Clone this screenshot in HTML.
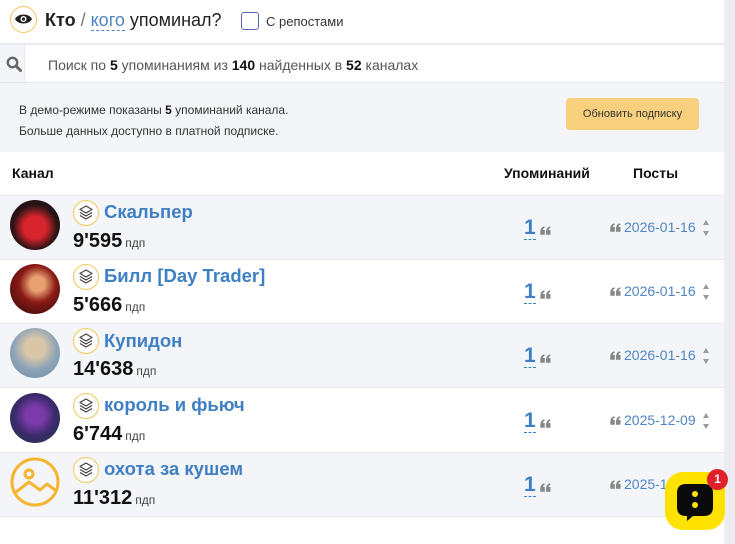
<!DOCTYPE html>
<html><head><meta charset="utf-8"><style>
*{margin:0;padding:0;box-sizing:border-box}
body{width:735px;height:544px;overflow:hidden;background:#fff;font-family:"Liberation Sans",Arial,sans-serif;position:relative;color:#111}
.a{position:absolute}
.sb{left:724px;top:0;width:11px;height:544px;background:#ececf1}
.row{left:0;width:724px;height:64px;border-bottom:1px solid #e6e8ee}
.g{background:#f4f5f8}
.av{left:10px;width:50px;height:50px;border-radius:50%}
.ic{left:73px;width:26px;height:26px;border-radius:50%;border:1.5px solid #f2c75c;background:#fff}
.nm{left:104px;font-size:18.5px;font-weight:bold;color:#3f7fc4}
.sub{left:73px;font-size:20px;font-weight:bold;color:#111}
.sub span{font-size:12px;font-weight:normal;color:#444;margin-left:3px}
.cnt{left:524px;font-size:21px;font-weight:bold;color:#3f7fc4;border-bottom:1px dashed #3f7fc4;line-height:22px}
.dt{left:610px;font-size:14px;color:#4f84c1}
.ar{left:703px;width:0;height:0;border-left:3.5px solid transparent;border-right:3.5px solid transparent}
</style></head><body>
<svg width="0" height="0" style="position:absolute"><defs><symbol id="q" viewBox="0 0 11 9"><path d="M0.3 8.7V5.5Q0.3 1.4 4.3 0.3L4.8 1.6Q3 2.5 2.9 4H4.8V8.7ZM6 8.7V5.5Q6 1.4 10 0.3L10.5 1.6Q8.7 2.5 8.6 4H10.5V8.7Z" fill="#888"/></symbol></defs></svg>
<div class="a sb"></div>
<div class="a" style="left:10px;top:6px;width:27px;height:27px;border-radius:50%;border:1.5px solid #f2c75c"></div>
<svg class="a" style="left:14px;top:12px" width="19" height="14" viewBox="0 0 19 14"><path d="M1 7C4 1 15 1 18 7C15 13 4 13 1 7Z" fill="#222"/><circle cx="9.5" cy="7" r="3" fill="#fff"/><circle cx="9.5" cy="7" r="1.6" fill="#222"/></svg>
<div class="a" style="left:45px;top:10px;font-size:18px;color:#222"><b>Кто</b> <span style="color:#777">/</span> <span style="color:#4f84c1;border-bottom:1px dashed #4f84c1">кого</span> упоминал?</div>
<div class="a" style="left:241px;top:12px;width:18px;height:18px;border:1.5px solid #5566bb;border-radius:3px"></div>
<div class="a" style="left:266px;top:14px;font-size:13px;color:#333">С репостами</div>
<div class="a" style="left:0;top:43px;width:724px;height:2px;background:#e8eaef"></div>
<div class="a" style="left:0;top:45px;width:25px;height:37px;background:#f4f5f8;border-right:1px solid #e6e8ee"></div>
<svg class="a" style="left:6px;top:56px" width="16" height="16" viewBox="0 0 16 16"><circle cx="6.5" cy="6.5" r="4.7" fill="none" stroke="#666" stroke-width="2.4"/><path d="M10 10l4.5 4.5" stroke="#666" stroke-width="3" stroke-linecap="round"/></svg>
<div class="a" style="left:48px;top:57px;font-size:14px;color:#555">Поиск по <b style="color:#111">5</b> упоминаниям из <b style="color:#111">140</b> найденных в <b style="color:#111">52</b> каналах</div>
<div class="a" style="left:0;top:82px;width:724px;height:70px;background:#f4f5f8;border-top:1px solid #e6e8ee"></div>
<div class="a" style="left:19px;top:100px;font-size:12px;color:#333;line-height:21px">В демо-режиме показаны <b style="color:#111">5</b> упоминаний канала.<br>Больше данных доступно в платной подписке.</div>
<div class="a" style="left:566px;top:98px;width:133px;height:32px;background:#f7cf7d;border-radius:4px;font-size:11px;color:#333;text-align:center;line-height:32px">Обновить подписку</div>
<div class="a" style="left:12px;top:165px;font-size:14px;font-weight:bold">Канал</div>
<div class="a" style="left:504px;top:165px;font-size:14px;font-weight:bold">Упоминаний</div>
<div class="a" style="left:633px;top:165px;font-size:14px;font-weight:bold">Посты</div>
<div class="a" style="left:0;top:195px;width:724px;height:1px;background:#e6e8ee"></div>

<div class="a row g" style="top:196px"></div>
<div class="a row" style="top:260px"></div>
<div class="a row g" style="top:324px"></div>
<div class="a row" style="top:389px"></div>
<div class="a row g" style="top:453px"></div>

<div class="a av" style="top:200px;background:radial-gradient(circle at 50% 55%,#d8242c 0 30%,#2a1416 60%,#0d0d12)"></div>
<div class="a av" style="top:264px;background:radial-gradient(circle at 55% 40%,#e8a070 0 18%,#8a1a16 45%,#2a0808)"></div>
<div class="a av" style="top:328px;background:radial-gradient(circle at 50% 40%,#d9c6a8 0 25%,#8fa4b8 55%,#6d8aa4)"></div>
<div class="a av" style="top:393px;background:radial-gradient(circle at 50% 45%,#7a3aa8 0 25%,#3a2a6a 55%,#1a3a4a)"></div>
<svg class="a" style="left:10px;top:457px" width="50" height="50" viewBox="0 0 50 50"><circle cx="25" cy="25" r="23" fill="none" stroke="#f5b52e" stroke-width="3"/><circle cx="19" cy="17" r="4" fill="none" stroke="#f5b52e" stroke-width="3"/><path d="M6 35L19 25L30 33L37 27L45 33" fill="none" stroke="#f5b52e" stroke-width="3" stroke-linejoin="round"/></svg>

<div class="a ic" style="top:200px"></div><div class="a ic" style="top:264px"></div><div class="a ic" style="top:328px"></div><div class="a ic" style="top:393px"></div><div class="a ic" style="top:457px"></div>
<svg class="a" style="left:78px;top:204px" width="16" height="18" viewBox="0 0 16 18"><g fill="none" stroke="#444" stroke-width="1.3" stroke-linejoin="round"><path d="M8 2L14 5.5L8 9L2 5.5Z"/><path d="M2 8.5L8 12L14 8.5"/><path d="M2 11.5L8 15L14 11.5"/></g></svg>
<svg class="a" style="left:78px;top:268px" width="16" height="18" viewBox="0 0 16 18"><g fill="none" stroke="#444" stroke-width="1.3" stroke-linejoin="round"><path d="M8 2L14 5.5L8 9L2 5.5Z"/><path d="M2 8.5L8 12L14 8.5"/><path d="M2 11.5L8 15L14 11.5"/></g></svg>
<svg class="a" style="left:78px;top:332px" width="16" height="18" viewBox="0 0 16 18"><g fill="none" stroke="#444" stroke-width="1.3" stroke-linejoin="round"><path d="M8 2L14 5.5L8 9L2 5.5Z"/><path d="M2 8.5L8 12L14 8.5"/><path d="M2 11.5L8 15L14 11.5"/></g></svg>
<svg class="a" style="left:78px;top:397px" width="16" height="18" viewBox="0 0 16 18"><g fill="none" stroke="#444" stroke-width="1.3" stroke-linejoin="round"><path d="M8 2L14 5.5L8 9L2 5.5Z"/><path d="M2 8.5L8 12L14 8.5"/><path d="M2 11.5L8 15L14 11.5"/></g></svg>
<svg class="a" style="left:78px;top:461px" width="16" height="18" viewBox="0 0 16 18"><g fill="none" stroke="#444" stroke-width="1.3" stroke-linejoin="round"><path d="M8 2L14 5.5L8 9L2 5.5Z"/><path d="M2 8.5L8 12L14 8.5"/><path d="M2 11.5L8 15L14 11.5"/></g></svg>

<div class="a nm" style="top:201px">Скальпер</div>
<div class="a nm" style="top:265px">Билл [Day Trader]</div>
<div class="a nm" style="top:330px">Купидон</div>
<div class="a nm" style="top:394px">король и фьюч</div>
<div class="a nm" style="top:458px">охота за кушем</div>
<div class="a sub" style="top:230px">9'595<span>пдп</span></div>
<div class="a sub" style="top:294px">5'666<span>пдп</span></div>
<div class="a sub" style="top:358px">14'638<span>пдп</span></div>
<div class="a sub" style="top:423px">6'744<span>пдп</span></div>
<div class="a sub" style="top:487px">11'312<span>пдп</span></div>

<div class="a cnt" style="top:217px">1</div><svg class="a" style="left:540px;top:226px" width="11" height="9"><use href="#q"/></svg>
<div class="a cnt" style="top:281px">1</div><svg class="a" style="left:540px;top:290px" width="11" height="9"><use href="#q"/></svg>
<div class="a cnt" style="top:345px">1</div><svg class="a" style="left:540px;top:354px" width="11" height="9"><use href="#q"/></svg>
<div class="a cnt" style="top:410px">1</div><svg class="a" style="left:540px;top:419px" width="11" height="9"><use href="#q"/></svg>
<div class="a cnt" style="top:474px">1</div><svg class="a" style="left:540px;top:483px" width="11" height="9"><use href="#q"/></svg>

<svg class="a" style="left:610px;top:223px" width="11" height="9"><use href="#q"/></svg><div class="a dt" style="left:624px;top:219px">2026-01-16</div>
<svg class="a" style="left:610px;top:287px" width="11" height="9"><use href="#q"/></svg><div class="a dt" style="left:624px;top:283px">2026-01-16</div>
<svg class="a" style="left:610px;top:351px" width="11" height="9"><use href="#q"/></svg><div class="a dt" style="left:624px;top:347px">2026-01-16</div>
<svg class="a" style="left:610px;top:416px" width="11" height="9"><use href="#q"/></svg><div class="a dt" style="left:624px;top:412px">2025-12-09</div>
<svg class="a" style="left:610px;top:480px" width="11" height="9"><use href="#q"/></svg><div class="a dt" style="left:624px;top:476px">2025-12-09</div>

<div class="a ar" style="top:220px;border-bottom:5px solid #999"></div><div class="a ar" style="top:231px;border-top:5px solid #999"></div>
<div class="a ar" style="top:284px;border-bottom:5px solid #999"></div><div class="a ar" style="top:295px;border-top:5px solid #999"></div>
<div class="a ar" style="top:348px;border-bottom:5px solid #999"></div><div class="a ar" style="top:359px;border-top:5px solid #999"></div>
<div class="a ar" style="top:413px;border-bottom:5px solid #999"></div><div class="a ar" style="top:424px;border-top:5px solid #999"></div>

<div class="a" style="left:665px;top:472px;width:60px;height:58px;background:#ffe200;border-radius:18px"></div>
<svg class="a" style="left:676px;top:482px" width="38" height="40" viewBox="0 0 38 40"><path d="M10 2H28Q37 2 37 11V25Q37 34 28 34H17L11 39V34H10Q1 34 1 25V11Q1 2 10 2Z" fill="#0a0a0a"/><circle cx="19" cy="12" r="3" fill="#ffe200"/><circle cx="19" cy="23" r="3" fill="#ffe200"/></svg>
<div class="a" style="left:707px;top:469px;width:21px;height:21px;border-radius:50%;background:#e0212c;color:#fff;font-size:12px;font-weight:bold;text-align:center;line-height:21px">1</div>
</body></html>
